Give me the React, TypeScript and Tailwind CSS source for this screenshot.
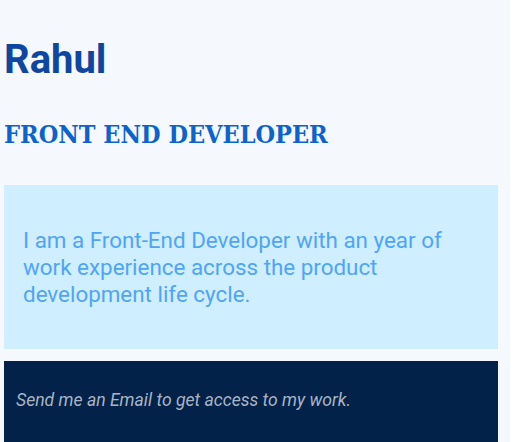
import React from 'react';

const App = () => {
  return (
    <div className="min-h-screen bg-white">
      <div className="w-[510px] min-h-screen bg-[#f5f8fd] pl-1 pr-3 pt-[36px]">
        {/* Name */}
        <h1 className="text-[40px] leading-[48px] font-bold text-[#0d47a1] font-['Roboto',sans-serif]">Rahul</h1>

        {/* Role */}
        <h2 className="mt-[36px] text-[25px] leading-[30px] font-bold text-[#0b63ce] font-['DejaVu_Serif_Condensed',serif]">
          FRONT END DEVELOPER
        </h2>

        {/* About */}
        <div className="mt-[35px] h-[164px] bg-[#cfeeff] px-[19px] flex items-center">
          <p className="text-[22.4px] leading-[27px] text-[#4fa5f5] font-['Roboto',sans-serif]">
            I am a Front-End Developer with an year of work experience across the product development life cycle.
          </p>
        </div>

        {/* Contact */}
        <div className="mt-3 h-[81px] bg-[#022249] px-3 pt-[26px]">
          <p className="text-[17.6px] leading-[26.4px] italic text-[#a9b4c4] font-['Roboto',sans-serif]">
            Send me an Email to get access to my work.
          </p>
        </div>
      </div>
    </div>
  );
};

export default App;
